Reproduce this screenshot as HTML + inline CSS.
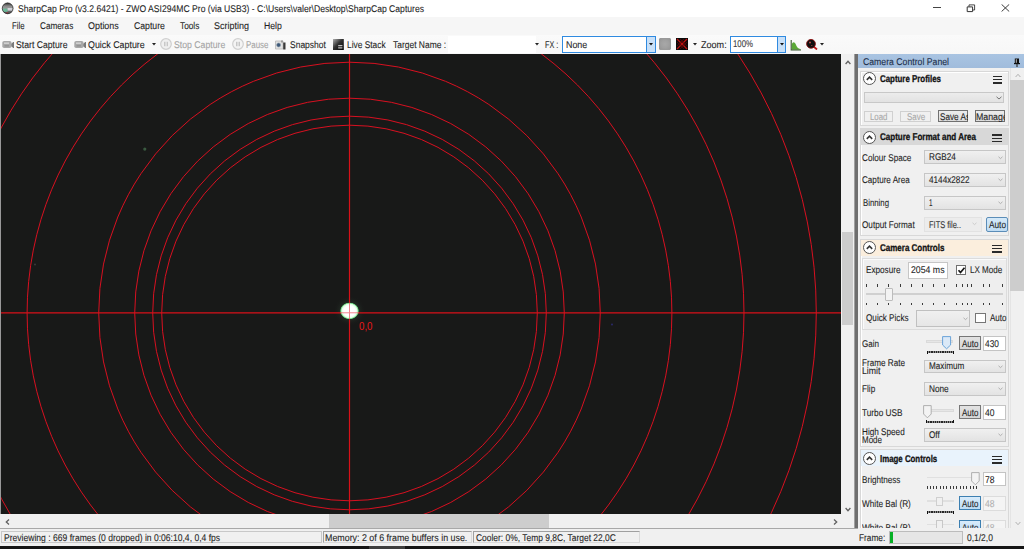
<!DOCTYPE html>
<html><head><meta charset="utf-8"><title>SharpCap</title>
<style>
html,body{margin:0;padding:0;width:1024px;height:549px;overflow:hidden;background:#f0f0f0;}
.bx,.ab,.t,.hb,.cc{position:absolute;box-sizing:border-box;}
.t{font-family:"Liberation Sans",sans-serif;white-space:pre;-webkit-text-stroke:0.1px currentColor;text-rendering:geometricPrecision;}
.hb{width:9.6px;height:8px}
.hb i{position:absolute;left:0;width:9.6px;height:1.55px;background:#2a2a2a;}
.cc svg{display:block}
#sb{position:absolute;left:0;top:0}
</style></head><body>
<div class='bx' style='left:0px;top:0px;width:1024px;height:17px;background:#ffffff;border:1px solid transparent;border:none'></div><svg class='ab' style='left:0;top:0' width='16' height='17'><defs><linearGradient id='ag' x1='0' y1='0' x2='0' y2='1'><stop offset='0' stop-color='#2a2a2a'/><stop offset='0.3' stop-color='#8a8a8a'/><stop offset='0.5' stop-color='#9a9a9a'/><stop offset='1' stop-color='#404040'/></linearGradient><clipPath id='acp'><circle cx='7.65' cy='8.35' r='5.5'/></clipPath></defs><circle cx='7.65' cy='8.35' r='5.6' fill='url(#ag)'/><g clip-path='url(#acp)'><rect x='3' y='8.6' width='4.6' height='3.2' fill='#6ab898'/><rect x='7.6' y='8' width='5' height='2.6' fill='#d0d0d8'/><rect x='6.6' y='12' width='1.2' height='2' fill='#a03040'/></g><circle cx='7.65' cy='8.35' r='5.4' fill='none' stroke='#2a2a2a' stroke-width='0.7'/></svg><div class='bx' style='left:933.2px;top:7.1px;width:8.2px;height:1px;background:#444'></div><svg class='ab' style='left:966px;top:3.5px' width='10' height='9'><path d='M1.2 2.9 H6.6 V7.6 H1.2 Z' fill='none' stroke='#333' stroke-width='1'/><path d='M3 2.7 V0.9 H8.6 V6 H6.8' fill='none' stroke='#333' stroke-width='0.9'/></svg><svg class='ab' style='left:1001px;top:3.6px' width='9' height='8'><path d='M0.6 0.4 L8.2 7.5 M8.2 0.4 L0.6 7.5' stroke='#333' stroke-width='0.95'/></svg><div class='bx' style='left:0px;top:17px;width:1024px;height:18px;background:#f6f6f6;border:1px solid transparent;border:none'></div><div class='bx' style='left:0px;top:35px;width:1024px;height:19px;background:linear-gradient(#fafafa,#f7f7f7);border:1px solid transparent;border:none'></div><svg class='ab' style='left:1.5px;top:40px' width='13' height='9'><rect x='0.3' y='1' width='9.2' height='7' rx='1.8' fill='#a8a8a8'/><rect x='2' y='2.4' width='5' height='1.6' fill='#cfcfcf'/><rect x='2.5' y='5.2' width='4.5' height='1.3' fill='#909090'/><path d='M9.3 3.8 L11.2 2 H12 V8 H11.2 L9.3 6.2 Z' fill='#7a7a7a'/></svg><svg class='ab' style='left:73.5px;top:40px' width='13' height='9'><rect x='0.3' y='1' width='9.2' height='7' rx='1.8' fill='#a8a8a8'/><rect x='2' y='2.4' width='5' height='1.6' fill='#cfcfcf'/><rect x='2.5' y='5.2' width='4.5' height='1.3' fill='#909090'/><path d='M9.3 3.8 L11.2 2 H12 V8 H11.2 L9.3 6.2 Z' fill='#7a7a7a'/></svg><svg class='ab' style='left:152px;top:43px' width='4' height='3'><path d='M0 0 H4 L2 2.5 Z' fill='#222'/></svg><svg class='ab' style='left:160px;top:38px' width='12' height='12'><circle cx='6' cy='6' r='5.3' fill='#f0f0f0' stroke='#cfcfcf' stroke-width='1.2'/><rect x='4' y='3.8' width='1.2' height='4.4' fill='#c8c8c8'/><rect x='6.8' y='3.8' width='1.2' height='4.4' fill='#c8c8c8'/><rect x='5.3' y='3.8' width='1.2' height='4.4' fill='#d8d8d8'/></svg><svg class='ab' style='left:232px;top:38px' width='12' height='12'><circle cx='6' cy='6' r='5.3' fill='#f4f4f4' stroke='#cfcfcf' stroke-width='1.2'/><rect x='4.2' y='3.8' width='1.2' height='4.4' fill='#bbb'/><rect x='6.6' y='3.8' width='1.2' height='4.4' fill='#bbb'/></svg><svg class='ab' style='left:275px;top:39.5px' width='11' height='10'><path d='M0.5 1 H8 V9 H0.5 Z' fill='#e2e2e2' stroke='#b8b8b8' stroke-width='0.8'/><circle cx='3.6' cy='5' r='2' fill='#3d5878' stroke='#8a9aaa' stroke-width='0.6'/><rect x='8.2' y='2.5' width='2.3' height='7' fill='#3a3a3a'/><rect x='6' y='0.5' width='2' height='2' fill='#999'/></svg><svg class='ab' style='left:333px;top:39px' width='11' height='11'><defs><linearGradient id='lsg' x1='0' y1='0' x2='1' y2='1'><stop offset='0' stop-color='#b0b0b0'/><stop offset='0.45' stop-color='#333'/><stop offset='1' stop-color='#000'/></linearGradient></defs><rect x='0' y='0' width='10.8' height='11' fill='url(#lsg)'/><rect x='5.2' y='6.2' width='4.2' height='1' fill='#e8e8e8'/><rect x='5.2' y='8.4' width='4.2' height='1' fill='#e8e8e8'/></svg><div class='bx' style='left:448px;top:36px;width:88px;height:17px;background:#ffffff;border:1px solid transparent;border:none'></div><svg class='ab' style='left:535px;top:43px' width='4' height='3'><path d='M0 0 H4 L2 2.5 Z' fill='#222'/></svg><div class='bx' style='left:562px;top:36.2px;width:94px;height:16.6px;background:#ffffff;border:1px solid #2f8ae0;'></div><div class='bx' style='left:646.2px;top:36.2px;width:9.8px;height:16.6px;background:#c8e0f8;border:1px solid #2f8ae0;'></div><svg class='ab' style='left:649px;top:43px' width='4' height='3'><path d='M0 0 H4 L2 2.5 Z' fill='#111'/></svg><div class='bx' style='left:659px;top:38.1px;width:11.8px;height:11.7px;background:radial-gradient(circle at 50% 50%,#a8a8a8 0,#a0a0a0 55%,#959595 100%);border:0.8px solid #9a9a9a;border-radius:1px'></div><svg class='ab' style='left:675.5px;top:38px' width='12' height='12'><rect x='0' y='0' width='12' height='12' fill='#0a0a0a'/><path d='M1 1 L11 11 M11 1 L1 11' stroke='#c01010' stroke-width='1.3'/><path d='M1 4 L8 11 M4 1 L11 8 M1 8 L8 1 M4 11 L11 4' stroke='#700' stroke-width='0.6'/></svg><svg class='ab' style='left:692.5px;top:43px' width='4' height='3'><path d='M0 0 H4 L2 2.5 Z' fill='#222'/></svg><div class='bx' style='left:730.2px;top:36.2px;width:56px;height:16.6px;background:#ffffff;border:1px solid #2f8ae0;'></div><div class='bx' style='left:776.6px;top:36.2px;width:9.6px;height:16.6px;background:#c8e0f8;border:1px solid #2f8ae0;'></div><svg class='ab' style='left:779.5px;top:43px' width='4' height='3'><path d='M0 0 H4 L2 2.5 Z' fill='#111'/></svg><svg class='ab' style='left:789.5px;top:38.5px' width='12' height='12'><path d='M1.8 10.8 L1.8 5 Q2.6 3 4 3.2 Q5.5 3.6 6.5 7 Q7.5 9.8 10.6 10.2 L10.6 10.8 Z' fill='#5aa836'/><path d='M1.2 1 V11 H11' fill='none' stroke='#3a5a30' stroke-width='1.1'/></svg><svg class='ab' style='left:805.5px;top:39px' width='13' height='11'><path d='M7 7 L11 10.5' stroke='#c01818' stroke-width='1.8'/><circle cx='5' cy='4.8' r='4.4' fill='#101010' stroke='#8a1010' stroke-width='0.9'/><circle cx='4' cy='3.5' r='0.9' fill='#d05050'/><circle cx='5.8' cy='6.5' r='0.6' fill='#b04040'/></svg><svg class='ab' style='left:820px;top:43px' width='4' height='3'><path d='M0 0 H4 L2 2.5 Z' fill='#222'/></svg><svg class='ab' style='left:0;top:54.4px' width='841' height='460.4' viewBox='0 0 841 460.4'><rect width='841' height='460.4' fill='#181918'/><circle cx='144.8' cy='95.1' r='1.6' fill='#3a5a40'/><circle cx='35' cy='210.6' r='1' fill='#3a3a3a'/><circle cx='612' cy='270.6' r='1' fill='#2a2a6a'/><g fill='none' stroke='#d81020' stroke-width='1.0'><circle cx='349.5' cy='259.0' r='187.8'/><circle cx='349.5' cy='259.0' r='196.8'/><circle cx='349.5' cy='259.0' r='214.8'/><circle cx='349.5' cy='259.0' r='250.8'/><circle cx='349.5' cy='259.0' r='322.4'/><circle cx='349.5' cy='259.0' r='394.5'/><circle cx='349.5' cy='259.0' r='466.8'/></g><defs><radialGradient id='star' cx='50%' cy='50%' r='50%'><stop offset='0' stop-color='#ffffff'/><stop offset='0.6' stop-color='#ffffff'/><stop offset='0.8' stop-color='#e0ffe4'/><stop offset='0.92' stop-color='#70e888' stop-opacity='0.85'/><stop offset='1' stop-color='#30a050' stop-opacity='0'/></radialGradient></defs><defs><radialGradient id='halo' cx='50%' cy='50%' r='50%'><stop offset='0' stop-color='#6ab07a' stop-opacity='0.55'/><stop offset='1' stop-color='#1a1a1a' stop-opacity='0'/></radialGradient></defs><ellipse cx='349.5' cy='256.9' rx='16' ry='15' fill='url(#halo)'/><g stroke='#d81018' stroke-width='1.2'><path d='M349.5 0 V460.4'/><path d='M0 258.8 H841'/></g><ellipse cx='349.5' cy='256.9' rx='9.6' ry='8.6' fill='url(#star)' opacity='1'/><g stroke='#f05060' stroke-width='1' opacity='0.7'><path d='M349.5 249 V265'/><path d='M340 258.8 H359'/></g><rect x='0' y='0' width='1' height='460.4' fill='#9a9a9a'/></svg><div class='bx' style='left:841px;top:54px;width:13px;height:460.4px;background:#f0f0f0;border:1px solid transparent;border:none'></div><div class='bx' style='left:841.5px;top:232px;width:11.5px;height:93px;background:#cdcdcd;border:1px solid transparent;border:none'></div><svg class='ab' style='left:844.5px;top:59.5px' width='6' height='5'><path d='M0.6 4 L3 1.3 L5.4 4' fill='none' stroke='#606060' stroke-width='1.3'/></svg><svg class='ab' style='left:844.5px;top:507px' width='6' height='5'><path d='M0.6 1 L3 3.7 L5.4 1' fill='none' stroke='#606060' stroke-width='1.3'/></svg><div class='bx' style='left:0px;top:514.4px;width:854px;height:13.6px;background:#f0f0f0;border:1px solid transparent;border:none'></div><div class='bx' style='left:329px;top:514.4px;width:220px;height:13.6px;background:#cdcdcd;border:1px solid transparent;border:none'></div><svg class='ab' style='left:4.5px;top:518.5px' width='5' height='6'><path d='M4 0.6 L1.3 3 L4 5.4' fill='none' stroke='#606060' stroke-width='1.3'/></svg><svg class='ab' style='left:833px;top:518.5px' width='5' height='6'><path d='M1 0.6 L3.7 3 L1 5.4' fill='none' stroke='#606060' stroke-width='1.3'/></svg><div class='bx' style='left:841px;top:514.4px;width:13px;height:13.6px;background:#f0f0f0;border:1px solid transparent;border:none'></div><div class='bx' style='left:854px;top:54px;width:4px;height:474px;background:#6e6e6e;border:1px solid transparent;border:none;border-left:0.6px solid #a0a0a0'></div><div class='bx' style='left:858px;top:54px;width:166px;height:474px;background:#f0f0f0;border:1px solid transparent;border:none'></div><div class='bx' style='left:858px;top:54px;width:166px;height:13.8px;background:linear-gradient(#a9c4e2,#a0bcdc);border:1px solid transparent;border:none'></div><svg class='ab' style='left:1013.5px;top:57.5px' width='6' height='9'><rect x='0.8' y='0.5' width='4.2' height='5' fill='#111'/><rect x='0' y='5' width='6' height='1.2' fill='#111'/><rect x='2.4' y='6' width='1.2' height='3' fill='#333'/><rect x='1.8' y='1.2' width='1' height='3.6' fill='#bbb'/></svg><div class='bx' style='left:1009.6px;top:68px;width:14.4px;height:460px;background:#f0f0f0;border:1px solid transparent;border:none;border-left:0.6px solid #e4e4e4'></div><div class='bx' style='left:1010.4px;top:80.2px;width:13.6px;height:210.8px;background:#cdcdcd;border:1px solid transparent;border:none'></div><svg class='ab' style='left:1014.5px;top:72.5px' width='6' height='5'><path d='M0.6 4 L3 1.3 L5.4 4' fill='none' stroke='#b0b0b0' stroke-width='1'/></svg><svg class='ab' style='left:1014.5px;top:520.5px' width='6' height='5'><path d='M0.6 1 L3 3.7 L5.4 1' fill='none' stroke='#b0b0b0' stroke-width='1'/></svg><div class='bx' style='left:859.8px;top:70.5px;width:149px;height:55.5px;background:#f0f0f0;border:1px solid #d8d8d8;box-shadow:inset 1px 1px 0 #fff'></div><div class='cc' style='left:862.9px;top:72.4px'><svg width='13' height='13' viewBox='0 0 13 13'><circle cx='6.5' cy='6.5' r='6' fill='#fff' stroke='#555' stroke-width='1'/><path d='M3.8 7.8 L6.5 5.2 L9.2 7.8' fill='none' stroke='#333' stroke-width='1.6'/></svg></div><div class='hb' style='left:992.6px;top:75.6px'><i style='top:0'></i><i style='top:3.3px'></i><i style='top:6.6px'></i></div><div class='bx' style='left:863.6px;top:91.5px;width:140.5px;height:11.5px;background:linear-gradient(#ececec,#e2e2e2);border:1px solid #c8c8c8;'></div><svg class='ab' style='left:995.5px;top:95.5px' width='6' height='4'><path d='M0.5 0.8 L3 3 L5.5 0.8' fill='none' stroke='#666' stroke-width='0.9'/></svg><div class='bx' style='left:863.6px;top:110.6px;width:29.6px;height:11px;background:#f0f0f0;border:1px solid #d0d0d0;'></div><div class='bx' style='left:900.3px;top:110.6px;width:30.6px;height:11px;background:#f0f0f0;border:1px solid #d0d0d0;'></div><div class='bx' style='left:938px;top:110.2px;width:30px;height:12px;background:linear-gradient(#ececec,#dcdcdc);border:1px solid #707070;'></div><div class='bx' style='left:974.5px;top:110.2px;width:30px;height:12px;background:linear-gradient(#ececec,#dcdcdc);border:1px solid #707070;'></div><div class='bx' style='left:859.8px;top:128.3px;width:149px;height:108.2px;background:#f0f0f0;border:1px solid #d8d8d8;box-shadow:inset 1px 1px 0 #fff'></div><div class='bx' style='left:861px;top:128.8px;width:147px;height:16.3px;background:#d8d8d8;border:1px solid transparent;border:none'></div><div class='cc' style='left:862.9px;top:130.8px'><svg width='13' height='13' viewBox='0 0 13 13'><circle cx='6.5' cy='6.5' r='6' fill='#fff' stroke='#555' stroke-width='1'/><path d='M3.8 7.8 L6.5 5.2 L9.2 7.8' fill='none' stroke='#333' stroke-width='1.6'/></svg></div><div class='hb' style='left:992.4px;top:134.3px'><i style='top:0'></i><i style='top:3.3px'></i><i style='top:6.6px'></i></div><div class='bx' style='left:924px;top:150px;width:82px;height:14px;background:linear-gradient(#f0f0f0,#e3e3e3);border:1px solid #c6c6c6;'></div><svg class='ab' style='left:997.5px;top:155.5px' width='5' height='4'><path d='M0.5 0.8 L2.5 2.6 L4.5 0.8' fill='none' stroke='#a8a8a8' stroke-width='0.9'/></svg><div class='bx' style='left:924px;top:172.5px;width:82px;height:14px;background:linear-gradient(#f0f0f0,#e3e3e3);border:1px solid #c6c6c6;'></div><svg class='ab' style='left:997.5px;top:178.0px' width='5' height='4'><path d='M0.5 0.8 L2.5 2.6 L4.5 0.8' fill='none' stroke='#a8a8a8' stroke-width='0.9'/></svg><div class='bx' style='left:924px;top:195.6px;width:82px;height:14px;background:linear-gradient(#f0f0f0,#e3e3e3);border:1px solid #c6c6c6;'></div><svg class='ab' style='left:997.5px;top:201.1px' width='5' height='4'><path d='M0.5 0.8 L2.5 2.6 L4.5 0.8' fill='none' stroke='#a8a8a8' stroke-width='0.9'/></svg><div class='bx' style='left:924px;top:216.5px;width:58px;height:15px;background:#ececec;border:1px solid #e2e2e2;'></div><svg class='ab' style='left:971.5px;top:222px' width='5' height='4'><path d='M0.5 0.8 L2.5 2.6 L4.5 0.8' fill='none' stroke='#c8c8c8' stroke-width='0.9'/></svg><div class='bx' style='left:986.2px;top:217.1px;width:22px;height:15px;background:linear-gradient(#d4e9f9,#bfdcf3);border:1px solid #5b8db8;border-radius:2px'></div><div class='bx' style='left:859.8px;top:238.8px;width:149px;height:208.6px;background:#f0f0f0;border:1px solid #d8d8d8;box-shadow:inset 1px 1px 0 #fff'></div><div class='bx' style='left:861px;top:239.5px;width:147px;height:16.7px;background:#fbeedd;border:1px solid transparent;border:none'></div><div class='cc' style='left:862.9px;top:241px'><svg width='13' height='13' viewBox='0 0 13 13'><circle cx='6.5' cy='6.5' r='6' fill='#fff' stroke='#555' stroke-width='1'/><path d='M3.8 7.8 L6.5 5.2 L9.2 7.8' fill='none' stroke='#333' stroke-width='1.6'/></svg></div><div class='hb' style='left:992.3px;top:244.5px'><i style='top:0'></i><i style='top:3.3px'></i><i style='top:6.6px'></i></div><div class='bx' style='left:862px;top:257.8px;width:144.6px;height:72.6px;background:#eeeeee;border:1px solid #dcdcdc;box-shadow:inset 1px 1px 0 #fafafa'></div><div class='bx' style='left:907.9px;top:261.5px;width:39.8px;height:17.8px;background:#ffffff;border:1px solid #c6c6c6;'></div><div class='bx' style='left:956.2px;top:265.2px;width:9.8px;height:9.5px;background:#ffffff;border:1px solid #707070;border-width:1px'></div><svg class='ab' style='left:957px;top:266px' width='9' height='9'><path d='M1.5 4.3 L3.5 6.5 L7.5 1.8' fill='none' stroke='#151515' stroke-width='1.7'/></svg><div class='bx' style='left:865.7px;top:283.8px;width:1px;height:2.8px;background:#3a3a3a'></div><div class='bx' style='left:876.8px;top:283.8px;width:1px;height:2.8px;background:#3a3a3a'></div><div class='bx' style='left:888.0px;top:283.8px;width:1px;height:2.8px;background:#3a3a3a'></div><div class='bx' style='left:899.8px;top:283.8px;width:1px;height:2.8px;background:#3a3a3a'></div><div class='bx' style='left:911.3px;top:283.8px;width:1px;height:2.8px;background:#3a3a3a'></div><div class='bx' style='left:921.9px;top:283.8px;width:1px;height:2.8px;background:#3a3a3a'></div><div class='bx' style='left:932.9px;top:283.8px;width:1px;height:2.8px;background:#3a3a3a'></div><div class='bx' style='left:944.4px;top:283.8px;width:1px;height:2.8px;background:#3a3a3a'></div><div class='bx' style='left:955.6px;top:283.8px;width:1px;height:2.8px;background:#3a3a3a'></div><div class='bx' style='left:962.1px;top:283.8px;width:1px;height:2.8px;background:#3a3a3a'></div><div class='bx' style='left:967.1px;top:283.8px;width:1px;height:2.8px;background:#3a3a3a'></div><div class='bx' style='left:970.7px;top:283.8px;width:1px;height:2.8px;background:#3a3a3a'></div><div class='bx' style='left:982.7px;top:283.8px;width:1px;height:2.8px;background:#3a3a3a'></div><div class='bx' style='left:988.7px;top:283.8px;width:1px;height:2.8px;background:#3a3a3a'></div><div class='bx' style='left:1002.0px;top:283.8px;width:1px;height:2.8px;background:#3a3a3a'></div><div class='bx' style='left:865.7px;top:302.7px;width:1px;height:2.8px;background:#3a3a3a'></div><div class='bx' style='left:876.8px;top:302.7px;width:1px;height:2.8px;background:#3a3a3a'></div><div class='bx' style='left:888.0px;top:302.7px;width:1px;height:2.8px;background:#3a3a3a'></div><div class='bx' style='left:899.8px;top:302.7px;width:1px;height:2.8px;background:#3a3a3a'></div><div class='bx' style='left:911.3px;top:302.7px;width:1px;height:2.8px;background:#3a3a3a'></div><div class='bx' style='left:921.9px;top:302.7px;width:1px;height:2.8px;background:#3a3a3a'></div><div class='bx' style='left:932.9px;top:302.7px;width:1px;height:2.8px;background:#3a3a3a'></div><div class='bx' style='left:944.4px;top:302.7px;width:1px;height:2.8px;background:#3a3a3a'></div><div class='bx' style='left:955.6px;top:302.7px;width:1px;height:2.8px;background:#3a3a3a'></div><div class='bx' style='left:962.1px;top:302.7px;width:1px;height:2.8px;background:#3a3a3a'></div><div class='bx' style='left:967.1px;top:302.7px;width:1px;height:2.8px;background:#3a3a3a'></div><div class='bx' style='left:970.7px;top:302.7px;width:1px;height:2.8px;background:#3a3a3a'></div><div class='bx' style='left:982.7px;top:302.7px;width:1px;height:2.8px;background:#3a3a3a'></div><div class='bx' style='left:988.7px;top:302.7px;width:1px;height:2.8px;background:#3a3a3a'></div><div class='bx' style='left:1002.0px;top:302.7px;width:1px;height:2.8px;background:#3a3a3a'></div><div class='bx' style='left:866px;top:293.2px;width:136.5px;height:1.8px;background:#e3e3e3;border:1px solid #d0d0d0;border-width:0.5px'></div><div class='bx' style='left:885.2px;top:288.2px;width:8.3px;height:12.6px;background:#f3f3f3;border:1px solid #bcbcbc;border-radius:1px'></div><div class='bx' style='left:916.4px;top:309.5px;width:54px;height:17.8px;background:linear-gradient(#f0f0f0,#e6e6e6);border:1px solid #c0c0c0;'></div><svg class='ab' style='left:963px;top:317px' width='5' height='4'><path d='M0.5 0.8 L2.5 2.6 L4.5 0.8' fill='none' stroke='#a8a8a8' stroke-width='0.9'/></svg><div class='bx' style='left:975.2px;top:313.1px;width:10.6px;height:10px;background:#ffffff;border:1px solid #767676;border-width:1px'></div><div class='bx' style='left:926.2px;top:339.9px;width:27.3px;height:3.3px;background:#e6e6e6;border:1px solid #dadada;border-width:0.6px'></div><svg class='ab' style='left:941.6px;top:335.8px' width='10' height='14'><path d='M0.6 0.6 H8.6 V9 L4.6 12.8 L0.6 9 Z' fill='#dbe9f7' stroke='#5b9bd5' stroke-width='0.9'/></svg><div class='bx' style='left:926.5px;top:351.1px;width:27.100000000000023px;height:2px;background:repeating-linear-gradient(90deg,#262626 0 1.2px,#8a8a8a 1.2px 2.2px)'></div><div class='bx' style='left:926.5px;top:350.8px;width:1px;height:3px;background:#111'></div><div class='bx' style='left:952.6px;top:350.8px;width:1px;height:3px;background:#111'></div><div class='bx' style='left:959px;top:336.2px;width:21.5px;height:14.2px;background:linear-gradient(#e2e2e2,#d6d6d6);border:1px solid #777;'></div><div class='bx' style='left:983px;top:336.2px;width:22.8px;height:14.4px;background:#ffffff;border:1px solid #c4c4c4;'></div><div class='bx' style='left:924px;top:359.6px;width:82.4px;height:13.8px;background:linear-gradient(#f0f0f0,#e3e3e3);border:1px solid #c6c6c6;'></div><svg class='ab' style='left:998px;top:364.8px' width='5' height='4'><path d='M0.5 0.8 L2.5 2.6 L4.5 0.8' fill='none' stroke='#a8a8a8' stroke-width='0.9'/></svg><div class='bx' style='left:924px;top:382.2px;width:82.4px;height:13.8px;background:linear-gradient(#f0f0f0,#e3e3e3);border:1px solid #c6c6c6;'></div><svg class='ab' style='left:998px;top:387.4px' width='5' height='4'><path d='M0.5 0.8 L2.5 2.6 L4.5 0.8' fill='none' stroke='#a8a8a8' stroke-width='0.9'/></svg><div class='bx' style='left:924px;top:428.2px;width:82.4px;height:13.8px;background:linear-gradient(#f0f0f0,#e3e3e3);border:1px solid #c6c6c6;'></div><svg class='ab' style='left:998px;top:433.4px' width='5' height='4'><path d='M0.5 0.8 L2.5 2.6 L4.5 0.8' fill='none' stroke='#a8a8a8' stroke-width='0.9'/></svg><div class='bx' style='left:929px;top:409.2px;width:24.5px;height:3.3px;background:#e6e6e6;border:1px solid #dadada;border-width:0.6px'></div><svg class='ab' style='left:923px;top:405px' width='10' height='14'><path d='M0.6 0.6 H8.2 V9 L4.4 12.8 L0.6 9 Z' fill='#f3f3f3' stroke='#a8a8a8' stroke-width='0.9'/></svg><div class='bx' style='left:926.2px;top:420.5px;width:27.399999999999977px;height:2px;background:repeating-linear-gradient(90deg,#262626 0 1.2px,#8a8a8a 1.2px 2.2px)'></div><div class='bx' style='left:926.2px;top:420.2px;width:1px;height:3px;background:#111'></div><div class='bx' style='left:952.6px;top:420.2px;width:1px;height:3px;background:#111'></div><div class='bx' style='left:959px;top:405.2px;width:21.5px;height:14.2px;background:linear-gradient(#e2e2e2,#d6d6d6);border:1px solid #777;'></div><div class='bx' style='left:983px;top:405.2px;width:22.8px;height:14.4px;background:#ffffff;border:1px solid #c4c4c4;'></div><div class='ab' style='left:858px;top:449px;width:152px;height:79.5px;overflow:hidden'><div class='bx' style='left:1.8px;top:0.2px;width:149px;height:120px;background:#f0f0f0;border:1px solid #d8d8d8;box-shadow:inset 1px 1px 0 #fff'></div><div class='bx' style='left:3px;top:0.5px;width:147px;height:16.5px;background:#e9f3fc;border:1px solid transparent;border:none'></div></div><div class='cc' style='left:862.9px;top:452px'><svg width='13' height='13' viewBox='0 0 13 13'><circle cx='6.5' cy='6.5' r='6' fill='#fff' stroke='#555' stroke-width='1'/><path d='M3.8 7.8 L6.5 5.2 L9.2 7.8' fill='none' stroke='#333' stroke-width='1.6'/></svg></div><div class='hb' style='left:992.2px;top:455.5px'><i style='top:0'></i><i style='top:3.3px'></i><i style='top:6.6px'></i></div><div class='bx' style='left:926.5px;top:476.5px;width:50px;height:1.6px;background:#e0e0e0;border:1px solid #e0e0e0;border:none'></div><svg class='ab' style='left:970.5px;top:471.8px' width='10' height='14'><path d='M0.6 0.6 H8.2 V9 L4.4 12.8 L0.6 9 Z' fill='#f3f3f3' stroke='#a8a8a8' stroke-width='0.9'/></svg><div class='bx' style='left:926.5px;top:486.3px;width:1px;height:2.6px;background:#3a3a3a'></div><div class='bx' style='left:929.83px;top:486.3px;width:1px;height:2.6px;background:#3a3a3a'></div><div class='bx' style='left:933.16px;top:486.3px;width:1px;height:2.6px;background:#3a3a3a'></div><div class='bx' style='left:936.49px;top:486.3px;width:1px;height:2.6px;background:#3a3a3a'></div><div class='bx' style='left:939.82px;top:486.3px;width:1px;height:2.6px;background:#3a3a3a'></div><div class='bx' style='left:943.15px;top:486.3px;width:1px;height:2.6px;background:#3a3a3a'></div><div class='bx' style='left:946.48px;top:486.3px;width:1px;height:2.6px;background:#3a3a3a'></div><div class='bx' style='left:949.81px;top:486.3px;width:1px;height:2.6px;background:#3a3a3a'></div><div class='bx' style='left:953.14px;top:486.3px;width:1px;height:2.6px;background:#3a3a3a'></div><div class='bx' style='left:956.47px;top:486.3px;width:1px;height:2.6px;background:#3a3a3a'></div><div class='bx' style='left:959.8px;top:486.3px;width:1px;height:2.6px;background:#3a3a3a'></div><div class='bx' style='left:963.13px;top:486.3px;width:1px;height:2.6px;background:#3a3a3a'></div><div class='bx' style='left:966.46px;top:486.3px;width:1px;height:2.6px;background:#3a3a3a'></div><div class='bx' style='left:969.79px;top:486.3px;width:1px;height:2.6px;background:#3a3a3a'></div><div class='bx' style='left:973.12px;top:486.3px;width:1px;height:2.6px;background:#3a3a3a'></div><div class='bx' style='left:976.45px;top:486.3px;width:1px;height:2.6px;background:#3a3a3a'></div><div class='bx' style='left:983.4px;top:472.2px;width:22.4px;height:14.3px;background:#ffffff;border:1px solid #c4c4c4;'></div><div class='bx' style='left:926.5px;top:500.2px;width:27px;height:1.4px;background:#e0e0e0;border:1px solid #e0e0e0;border:none'></div><div class='bx' style='left:936.3px;top:496.9px;width:6.4px;height:9.6px;background:#f0f0f0;border:1px solid #cfcfcf;border-width:0.8px'></div><div class='bx' style='left:926.5px;top:511.1px;width:27.100000000000023px;height:2px;background:repeating-linear-gradient(90deg,#262626 0 1.2px,#8a8a8a 1.2px 2.2px)'></div><div class='bx' style='left:926.5px;top:510.8px;width:1px;height:3px;background:#111'></div><div class='bx' style='left:952.6px;top:510.8px;width:1px;height:3px;background:#111'></div><div class='bx' style='left:959px;top:496.4px;width:21.5px;height:14.0px;background:linear-gradient(#d8ebfa,#bcdcf4);border:1px solid #3c7fb1;'></div><div class='bx' style='left:983.4px;top:496.4px;width:22.4px;height:14.2px;background:#f4f4f4;border:1px solid #dcdcdc;'></div><div class='bx' style='left:926.5px;top:523.8px;width:27px;height:1.4px;background:#e0e0e0;border:1px solid #e0e0e0;border:none'></div><div class='bx' style='left:936.4px;top:520px;width:6.2px;height:10px;background:#f0f0f0;border:1px solid #c8c8c8;border-width:0.7px'></div><div class='bx' style='left:959px;top:520px;width:21.5px;height:14.0px;background:linear-gradient(#d8ebfa,#bcdcf4);border:1px solid #3c7fb1;'></div><div class='bx' style='left:983.4px;top:520px;width:22.4px;height:14.2px;background:#f4f4f4;border:1px solid #dcdcdc;'></div>
<div class='t' style='left:17.5px;top:4.37px;font-size:9.8px;line-height:11.76px;font-weight:400;color:#1f1f1f;transform:scaleX(0.8783);transform-origin:0 0;'>SharpCap Pro (v3.2.6421) - ZWO ASI294MC Pro (via USB3) - C:\Users\valer\Desktop\SharpCap Captures</div>
<div class='t' style='left:11.9px;top:21.47px;font-size:9.8px;line-height:11.76px;font-weight:400;color:#1f1f1f;transform:scaleX(0.7913);transform-origin:0 0;'>File</div>
<div class='t' style='left:39.75px;top:21.47px;font-size:9.8px;line-height:11.76px;font-weight:400;color:#1f1f1f;transform:scaleX(0.8365);transform-origin:0 0;'>Cameras</div>
<div class='t' style='left:88px;top:21.47px;font-size:9.8px;line-height:11.76px;font-weight:400;color:#1f1f1f;transform:scaleX(0.9107);transform-origin:0 0;'>Options</div>
<div class='t' style='left:134px;top:21.47px;font-size:9.8px;line-height:11.76px;font-weight:400;color:#1f1f1f;transform:scaleX(0.8864);transform-origin:0 0;'>Capture</div>
<div class='t' style='left:179.9px;top:21.47px;font-size:9.8px;line-height:11.76px;font-weight:400;color:#1f1f1f;transform:scaleX(0.8459);transform-origin:0 0;'>Tools</div>
<div class='t' style='left:213.6px;top:21.47px;font-size:9.8px;line-height:11.76px;font-weight:400;color:#1f1f1f;transform:scaleX(0.9180);transform-origin:0 0;'>Scripting</div>
<div class='t' style='left:263.75px;top:21.47px;font-size:9.8px;line-height:11.76px;font-weight:400;color:#1f1f1f;transform:scaleX(0.8856);transform-origin:0 0;'>Help</div>
<div class='t' style='left:16px;top:39.72px;font-size:9.8px;line-height:11.76px;font-weight:400;color:#1f1f1f;transform:scaleX(0.8839);transform-origin:0 0;'>Start Capture</div>
<div class='t' style='left:87.5px;top:39.72px;font-size:9.8px;line-height:11.76px;font-weight:400;color:#1f1f1f;transform:scaleX(0.9062);transform-origin:0 0;'>Quick Capture</div>
<div class='t' style='left:174.25px;top:39.72px;font-size:9.8px;line-height:11.76px;font-weight:400;color:#a4a4a4;transform:scaleX(0.8877);transform-origin:0 0;-webkit-text-stroke:0.1px currentColor;'>Stop Capture</div>
<div class='t' style='left:246px;top:39.72px;font-size:9.8px;line-height:11.76px;font-weight:400;color:#a4a4a4;transform:scaleX(0.8099);transform-origin:0 0;-webkit-text-stroke:0.1px currentColor;'>Pause</div>
<div class='t' style='left:289.5px;top:39.72px;font-size:9.8px;line-height:11.76px;font-weight:400;color:#1f1f1f;transform:scaleX(0.8670);transform-origin:0 0;'>Snapshot</div>
<div class='t' style='left:346.6px;top:39.72px;font-size:9.8px;line-height:11.76px;font-weight:400;color:#1f1f1f;transform:scaleX(0.8539);transform-origin:0 0;'>Live Stack</div>
<div class='t' style='left:392.75px;top:39.72px;font-size:9.8px;line-height:11.76px;font-weight:400;color:#1f1f1f;transform:scaleX(0.8630);transform-origin:0 0;'>Target Name :</div>
<div class='t' style='left:544.75px;top:39.72px;font-size:9.8px;line-height:11.76px;font-weight:400;color:#1f1f1f;transform:scaleX(0.7374);transform-origin:0 0;'>FX :</div>
<div class='t' style='left:565.75px;top:39.77px;font-size:9.8px;line-height:11.76px;font-weight:400;color:#2a2a2a;transform:scaleX(0.9073);transform-origin:0 0;'>None</div>
<div class='t' style='left:700.6px;top:39.72px;font-size:9.8px;line-height:11.76px;font-weight:400;color:#1f1f1f;transform:scaleX(0.9238);transform-origin:0 0;'>Zoom:</div>
<div class='t' style='left:733px;top:39.27px;font-size:9.8px;line-height:11.76px;font-weight:400;color:#3a3a3a;transform:scaleX(0.7980);transform-origin:0 0;'>100%</div>
<div class='t' style='left:358.7px;top:320.37px;font-size:11.6px;line-height:13.92px;font-weight:400;color:#e81818;transform:scaleX(0.8372);transform-origin:0 0;-webkit-text-stroke:0;'>0,0</div>
<div class='t' style='left:862.9px;top:56.97px;font-size:9.8px;line-height:11.76px;font-weight:400;color:#1e2f4a;transform:scaleX(0.8872);transform-origin:0 0;'>Camera Control Panel</div>
<div class='t' style='left:880px;top:74.27px;font-size:9.8px;line-height:11.76px;font-weight:700;color:#111;transform:scaleX(0.8059);transform-origin:0 0;-webkit-text-stroke:0.3px currentColor;'>Capture Profiles</div>
<div class='t' style='left:880px;top:132.47px;font-size:9.8px;line-height:11.76px;font-weight:700;color:#111;transform:scaleX(0.8189);transform-origin:0 0;-webkit-text-stroke:0.3px currentColor;'>Capture Format and Area</div>
<div class='t' style='left:879.8px;top:243.22px;font-size:9.8px;line-height:11.76px;font-weight:700;color:#111;transform:scaleX(0.8157);transform-origin:0 0;-webkit-text-stroke:0.3px currentColor;'>Camera Controls</div>
<div class='t' style='left:880.3px;top:453.97px;font-size:9.8px;line-height:11.76px;font-weight:700;color:#111;transform:scaleX(0.8021);transform-origin:0 0;-webkit-text-stroke:0.3px currentColor;'>Image Controls</div>
<div class='t' style='left:870.2px;top:112.47px;font-size:9.8px;line-height:11.76px;font-weight:400;color:#a8a8a8;transform:scaleX(0.8029);transform-origin:0 0;'>Load</div>
<div class='t' style='left:906.8px;top:112.47px;font-size:9.8px;line-height:11.76px;font-weight:400;color:#a8a8a8;transform:scaleX(0.8145);transform-origin:0 0;'>Save</div>
<div class='t' style='left:939.5px;top:112.47px;font-size:9.8px;line-height:11.76px;font-weight:400;color:#1f1f1f;transform:scaleX(0.8344);transform-origin:0 0;clip-path:inset(-5px 2.40px -5px -5px);'>Save As</div>
<div class='t' style='left:975.6px;top:112.47px;font-size:9.8px;line-height:11.76px;font-weight:400;color:#1f1f1f;transform:scaleX(0.8981);transform-origin:0 0;clip-path:inset(-5px 3.45px -5px -5px);'>Manage</div>
<div class='t' style='left:862.3px;top:152.67px;font-size:9.8px;line-height:11.76px;font-weight:400;color:#1f1f1f;transform:scaleX(0.8320);transform-origin:0 0;'>Colour Space</div>
<div class='t' style='left:862.3px;top:175.07px;font-size:9.8px;line-height:11.76px;font-weight:400;color:#1f1f1f;transform:scaleX(0.8279);transform-origin:0 0;'>Capture Area</div>
<div class='t' style='left:862.8px;top:198.27px;font-size:9.8px;line-height:11.76px;font-weight:400;color:#1f1f1f;transform:scaleX(0.7954);transform-origin:0 0;'>Binning</div>
<div class='t' style='left:862.3px;top:220.17px;font-size:9.8px;line-height:11.76px;font-weight:400;color:#1f1f1f;transform:scaleX(0.8342);transform-origin:0 0;'>Output Format</div>
<div class='t' style='left:928.7px;top:152.37px;font-size:9.8px;line-height:11.76px;font-weight:400;color:#1f1f1f;transform:scaleX(0.8338);transform-origin:0 0;'>RGB24</div>
<div class='t' style='left:928.7px;top:174.87px;font-size:9.8px;line-height:11.76px;font-weight:400;color:#1f1f1f;transform:scaleX(0.8351);transform-origin:0 0;'>4144x2822</div>
<div class='t' style='left:929.2px;top:197.67px;font-size:9.8px;line-height:11.76px;font-weight:400;color:#1f1f1f;transform:scaleX(0.6418);transform-origin:0 0;'>1</div>
<div class='t' style='left:928.7px;top:219.97px;font-size:9.8px;line-height:11.76px;font-weight:400;color:#333;transform:scaleX(0.7633);transform-origin:0 0;'>FITS file..</div>
<div class='t' style='left:988.6px;top:220.07px;font-size:9.8px;line-height:11.76px;font-weight:400;color:#1f1f1f;transform:scaleX(0.8434);transform-origin:0 0;'>Auto</div>
<div class='t' style='left:865.8px;top:264.87px;font-size:9.8px;line-height:11.76px;font-weight:400;color:#1f1f1f;transform:scaleX(0.8335);transform-origin:0 0;'>Exposure</div>
<div class='t' style='left:910.5px;top:265.47px;font-size:9.8px;line-height:11.76px;font-weight:400;color:#1f1f1f;transform:scaleX(0.8915);transform-origin:0 0;'>2054 ms</div>
<div class='t' style='left:970.4px;top:265.37px;font-size:9.8px;line-height:11.76px;font-weight:400;color:#1f1f1f;transform:scaleX(0.8236);transform-origin:0 0;'>LX Mode</div>
<div class='t' style='left:866.2px;top:313.47px;font-size:9.8px;line-height:11.76px;font-weight:400;color:#1f1f1f;transform:scaleX(0.8325);transform-origin:0 0;'>Quick Picks</div>
<div class='t' style='left:989.7px;top:313.47px;font-size:9.8px;line-height:11.76px;font-weight:400;color:#1f1f1f;transform:scaleX(0.8186);transform-origin:0 0;'>Auto</div>
<div class='t' style='left:862.2px;top:338.97px;font-size:9.8px;line-height:11.76px;font-weight:400;color:#1f1f1f;transform:scaleX(0.8260);transform-origin:0 0;'>Gain</div>
<div class='t' style='left:961.8px;top:338.97px;font-size:9.8px;line-height:11.76px;font-weight:400;color:#1f1f1f;transform:scaleX(0.8136);transform-origin:0 0;'>Auto</div>
<div class='t' style='left:984.8px;top:338.97px;font-size:9.8px;line-height:11.76px;font-weight:400;color:#1f1f1f;transform:scaleX(0.8497);transform-origin:0 0;'>430</div>
<div class='t' style='left:862.2px;top:357.87px;font-size:9.8px;line-height:11.76px;font-weight:400;color:#1f1f1f;transform:scaleX(0.8312);transform-origin:0 0;'>Frame Rate</div>
<div class='t' style='left:862.2px;top:366.37px;font-size:9.8px;line-height:11.76px;font-weight:400;color:#1f1f1f;transform:scaleX(0.8943);transform-origin:0 0;'>Limit</div>
<div class='t' style='left:929px;top:361.47px;font-size:9.8px;line-height:11.76px;font-weight:400;color:#1f1f1f;transform:scaleX(0.8312);transform-origin:0 0;'>Maximum</div>
<div class='t' style='left:862.2px;top:384.47px;font-size:9.8px;line-height:11.76px;font-weight:400;color:#1f1f1f;transform:scaleX(0.8356);transform-origin:0 0;'>Flip</div>
<div class='t' style='left:929px;top:383.97px;font-size:9.8px;line-height:11.76px;font-weight:400;color:#1f1f1f;transform:scaleX(0.8411);transform-origin:0 0;'>None</div>
<div class='t' style='left:862.2px;top:407.77px;font-size:9.8px;line-height:11.76px;font-weight:400;color:#1f1f1f;transform:scaleX(0.8439);transform-origin:0 0;'>Turbo USB</div>
<div class='t' style='left:961.8px;top:407.77px;font-size:9.8px;line-height:11.76px;font-weight:400;color:#1f1f1f;transform:scaleX(0.8136);transform-origin:0 0;'>Auto</div>
<div class='t' style='left:984.8px;top:407.77px;font-size:9.8px;line-height:11.76px;font-weight:400;color:#1f1f1f;transform:scaleX(0.8711);transform-origin:0 0;'>40</div>
<div class='t' style='left:862.2px;top:426.87px;font-size:9.8px;line-height:11.76px;font-weight:400;color:#1f1f1f;transform:scaleX(0.8339);transform-origin:0 0;'>High Speed</div>
<div class='t' style='left:862.2px;top:435.47px;font-size:9.8px;line-height:11.76px;font-weight:400;color:#1f1f1f;transform:scaleX(0.8158);transform-origin:0 0;'>Mode</div>
<div class='t' style='left:929px;top:430.47px;font-size:9.8px;line-height:11.76px;font-weight:400;color:#1f1f1f;transform:scaleX(0.8301);transform-origin:0 0;'>Off</div>
<div class='t' style='left:862.2px;top:474.57px;font-size:9.8px;line-height:11.76px;font-weight:400;color:#1f1f1f;transform:scaleX(0.8294);transform-origin:0 0;'>Brightness</div>
<div class='t' style='left:984.8px;top:474.57px;font-size:9.8px;line-height:11.76px;font-weight:400;color:#1f1f1f;transform:scaleX(0.8711);transform-origin:0 0;'>78</div>
<div class='t' style='left:862.2px;top:498.67px;font-size:9.8px;line-height:11.76px;font-weight:400;color:#1f1f1f;transform:scaleX(0.8378);transform-origin:0 0;'>White Bal (R)</div>
<div class='t' style='left:961.8px;top:498.67px;font-size:9.8px;line-height:11.76px;font-weight:400;color:#1f1f1f;transform:scaleX(0.8136);transform-origin:0 0;'>Auto</div>
<div class='t' style='left:984.8px;top:498.67px;font-size:9.8px;line-height:11.76px;font-weight:400;color:#b0b0b0;transform:scaleX(0.8711);transform-origin:0 0;'>48</div>
<div class='t' style='left:862.2px;top:522.67px;font-size:9.8px;line-height:11.76px;font-weight:400;color:#1f1f1f;transform:scaleX(0.8455);transform-origin:0 0;clip-path:inset(0 0 3px 0);'>White Bal (B)</div>
<div class='t' style='left:961.8px;top:522.67px;font-size:9.8px;line-height:11.76px;font-weight:400;color:#1f1f1f;transform:scaleX(0.8136);transform-origin:0 0;'>Auto</div>
<div class='t' style='left:984.8px;top:522.67px;font-size:9.8px;line-height:11.76px;font-weight:400;color:#b0b0b0;transform:scaleX(0.8711);transform-origin:0 0;'>48</div>
<div id="sb"><div class='bx' style='left:0px;top:528px;width:1024px;height:17.5px;background:#f0f0f0;border:1px solid transparent;border:none'></div><div class='bx' style='left:0px;top:527.8px;width:858px;height:1px;background:#a8a8a8;border:1px solid transparent;border:none'></div><div class='bx' style='left:1px;top:530.6px;width:321px;height:12.4px;background:#f0f0f0;border:1px solid #c8c8c8;border-width:1px'></div><div class='bx' style='left:323px;top:530.6px;width:148.5px;height:12.4px;background:#f0f0f0;border:1px solid #a0a0a0;border-width:1px;border-right-color:#dadada;border-bottom-color:#dadada'></div><div class='bx' style='left:473px;top:530.6px;width:167px;height:12.4px;background:#f0f0f0;border:1px solid #a0a0a0;border-width:1px;border-right-color:#dadada;border-bottom-color:#dadada'></div><div class='bx' style='left:889px;top:531px;width:74.2px;height:12.6px;background:#e6e6e6;border:1px solid #bcbcbc;'></div><div class='bx' style='left:889.5px;top:531.5px;width:3px;height:11.6px;background:#06b025;border:1px solid transparent;border:none'></div><div class='bx' style='left:0px;top:545.5px;width:1024px;height:3.5px;background:#151515;border:1px solid transparent;border:none'></div><div class='bx' style='left:369px;top:545.8px;width:36px;height:3.2px;background:#3e3e3e;border:1px solid transparent;border:none'></div></div>
<div class='t' style='left:3.75px;top:533.07px;font-size:9.8px;line-height:11.76px;font-weight:400;color:#1f1f1f;transform:scaleX(0.8740);transform-origin:0 0;'>Previewing : 669 frames (0 dropped) in 0:06:10,4, 0,4 fps</div>
<div class='t' style='left:325.4px;top:533.07px;font-size:9.8px;line-height:11.76px;font-weight:400;color:#1f1f1f;transform:scaleX(0.9053);transform-origin:0 0;'>Memory: 2 of 6 frame buffers in use.</div>
<div class='t' style='left:475.9px;top:533.07px;font-size:9.8px;line-height:11.76px;font-weight:400;color:#1f1f1f;transform:scaleX(0.8608);transform-origin:0 0;'>Cooler: 0%, Temp 9,8C, Target 22,0C</div>
<div class='t' style='left:858.9px;top:533.07px;font-size:9.8px;line-height:11.76px;font-weight:400;color:#1f1f1f;transform:scaleX(0.8443);transform-origin:0 0;'>Frame:</div>
<div class='t' style='left:967.25px;top:533.07px;font-size:9.8px;line-height:11.76px;font-weight:400;color:#1f1f1f;transform:scaleX(0.8626);transform-origin:0 0;'>0,1/2,0</div>
</body></html>
